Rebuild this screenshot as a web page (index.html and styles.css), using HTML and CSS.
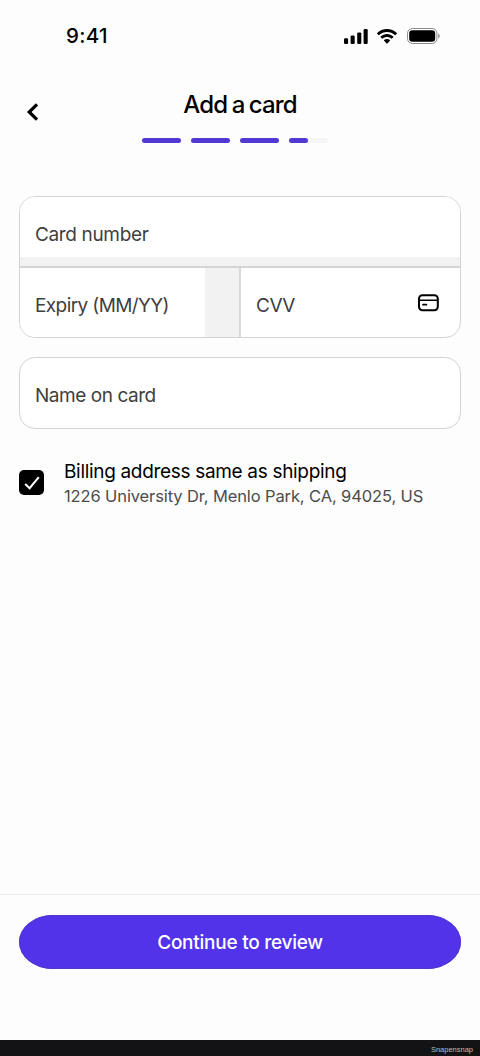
FILE: index.html
```html
<!DOCTYPE html>
<html lang="en">
<head>
<meta charset="utf-8">
<title>Add a card</title>
<link rel="stylesheet" href="styles.css">
</head>
<body>
<div class="screen">
  <div class="status">
    <span class="time">9:41</span>
    <div class="status-icons">
      <svg width="24" height="15" viewBox="0 0 24 15"><rect x="0" y="9.2" width="4.1" height="5.8" rx="1.2"/><rect x="6.6" y="6.6" width="4.1" height="8.4" rx="1.2"/><rect x="13.2" y="3.4" width="4.1" height="11.6" rx="1.2"/><rect x="19.6" y="0" width="4.1" height="15" rx="1.2"/></svg>
      <svg class="wifi" width="20" height="15" viewBox="0 0 20 15"><path d="M10 0C13.800 0 17.300 1.500 19.800 3.900Q20.200 4.300 19.800 4.700L18.500 6Q18.200 6.300 17.800 6C15.700 4.100 13 3 10 3S4.300 4.100 2.200 6Q1.800 6.300 1.500 6L.2 4.700Q-.2 4.300 .2 3.900C2.700 1.500 6.200 0 10 0Z"/><path d="M10 5.100C12.400 5.100 14.600 6 16.300 7.500Q16.700 7.900 16.300 8.300L15 9.600Q14.600 9.900 14.200 9.600C13 8.600 11.600 8.100 10 8.100S7 8.600 5.800 9.600Q5.400 9.900 5 9.600L3.700 8.300Q3.300 7.900 3.700 7.500C5.400 6 7.600 5.100 10 5.100Z"/><path d="M10 10C11.100 10 12.100 10.400 12.900 11Q13.300 11.400 12.900 11.800L10.400 14.400Q10 14.800 9.600 14.400L7.100 11.800Q6.700 11.400 7.100 11C7.900 10.400 8.900 10 10 10Z"/></svg>
      <svg width="33" height="16" viewBox="0 0 33 16"><rect x=".5" y=".5" width="29.400" height="15" rx="4.800" fill="none" stroke="#8c8c8c"/><rect x="2.200" y="2.300" width="26" height="11.400" rx="3.300"/><path d="M31.200 5.600Q32.800 6.300 32.800 8T31.200 10.400Z" fill="#8c8c8c"/></svg>
    </div>
  </div>
  <header class="header">
    <svg class="back" width="14" height="20" viewBox="0 0 14 20"><path d="M11 2.300L3.200 10L11 17.700" fill="none" stroke="#000" stroke-width="3.200"/></svg>
    <div class="heading">
      <h1 class="title">Add a card</h1>
      <div class="steps"><i class="step done"></i><i class="step done"></i><i class="step done"></i><i class="step partial"></i></div>
    </div>
  </header>
  <main class="form">
    <div class="card-group">
      <div class="field number">Card number</div>
      <div class="row">
        <div class="field expiry">Expiry (MM/YY)</div>
        <div class="field cvv"><span>CVV</span>
          <svg width="22" height="18" viewBox="0 0 22 18" fill="none" stroke="#000"><rect x="1" y="1.200" width="18.800" height="15" rx="3.400" stroke-width="2"/><path d="M1 6.200H19.800" stroke-width="1.600"/><path d="M5 10.700H8.400" stroke-width="1.700" stroke-linecap="round"/></svg>
        </div>
      </div>
    </div>
    <div class="name-box">Name on card</div>
    <div class="billing">
      <span class="check"><svg width="16" height="14" viewBox="0 0 16 14"><path d="M1.200 8L5.600 12.200L14.800 1.200" fill="none" stroke="#fff" stroke-width="2"/></svg></span>
      <div>
        <div class="same">Billing address same as shipping</div>
        <div class="address">1226 University Dr, Menlo Park, CA, 94025, US</div>
      </div>
    </div>
  </main>
  <footer class="footer"><button class="continue">Continue to review</button></footer>
  <div class="credit">Snapensnap</div>
</div>
</body>
</html>
```
FILE: styles.css
```css
* { box-sizing: border-box; }
body { margin: 0; background: #fdfdfd; font-family: Inter, "Liberation Sans", sans-serif; color: #000; }
svg { display: block; flex: none; }
.screen { width: 480px; height: 1056px; display: flex; flex-direction: column; overflow: hidden; }
.status { height: 72px; padding: 0 40px 0 66px; display: flex; justify-content: space-between; align-items: center; }
.time { font-size: 20.500px; font-weight: 550; letter-spacing: .3px; padding-bottom: 2px; }
.status-icons { display: flex; align-items: center; }
.wifi { margin: 0 10px 0 9px; }
.header { display: grid; grid-template-columns: 24px 1fr 24px; height: 125px; padding: 0 24px; }
.back { margin: 30px 0 0 2px; }
.heading { display: flex; flex-direction: column; align-items: center; padding-top: 17px; }
.title { margin: 0; font-size: 24px; line-height: 32px; font-weight: 550; letter-spacing: -.9px; word-spacing: -1px; white-space: nowrap; }
.steps { display: flex; gap: 9.500px; margin: 16.500px 0 0 -10px; }
.step { width: 39.300px; height: 5.500px; border-radius: 3px; background: #f5f5f6; }
.done { background: #5238d2; }
.partial::before { content: ""; display: block; width: 19.500px; height: 5.500px; border-radius: 3px; background: #5238d2; }
.form { padding: 0 19px; flex: 1; margin-top: -1px; }
.card-group { height: 142px; border: 1px solid #d4d4d4; border-radius: 16px; background: #fff; overflow: hidden; display: flex; flex-direction: column; }
.field { font-size: 19px; line-height: 24px; color: #404040; white-space: nowrap; }
.number { height: 71px; padding: 26px 15px 0; border-bottom: 2px solid #d4d4d4; background: linear-gradient(#fff 60px, #f2f2f2 60px); letter-spacing: -.35px; }
.row { display: flex; flex: 1; }
.expiry { width: 221px; padding: 26px 15px 0; border-right: 2px solid #d8d8d8; background: linear-gradient(90deg, #fff 185px, #f2f2f2 185px); letter-spacing: -.6px; }
.cvv { flex: 1; display: flex; justify-content: space-between; padding: 26px 20px 0 15px; letter-spacing: -.5px; }
.name-box { margin-top: 19px; height: 72px; padding: 26px 15px 0; border: 1px solid #d4d4d4; border-radius: 16px; background: #fff; font-size: 19px; line-height: 24px; color: #404040; letter-spacing: -.45px; }
.billing { display: flex; margin-top: 30px; }
.check { width: 25px; height: 25px; margin: 11px 20px 0 0; background: #000; border-radius: 5px; display: flex; align-items: center; justify-content: center; flex: none; }
.same { font-size: 19px; line-height: 26px; letter-spacing: -.32px; white-space: nowrap; }
.address { font-size: 16.500px; line-height: 22px; letter-spacing: -.12px; color: #4c4c4c; white-space: nowrap; }
.footer { height: 146px; border-top: 1px solid #ececec; padding: 20px 19px 0; }
.continue { display: block; width: 442px; height: 54px; border: 0; border-radius: 34px / 27px; background: #5233ea; color: #fff; font: 500 19px/24px Inter, sans-serif; letter-spacing: -.25px; box-shadow: inset 0 0 0 1px #5138cb; padding: 2px 0 0; }
.credit { height: 16px; background: #131315; color: #bcbcbc; font: 7.500px/19px "Liberation Sans", sans-serif; text-align: right; padding-right: 7px; }
```
